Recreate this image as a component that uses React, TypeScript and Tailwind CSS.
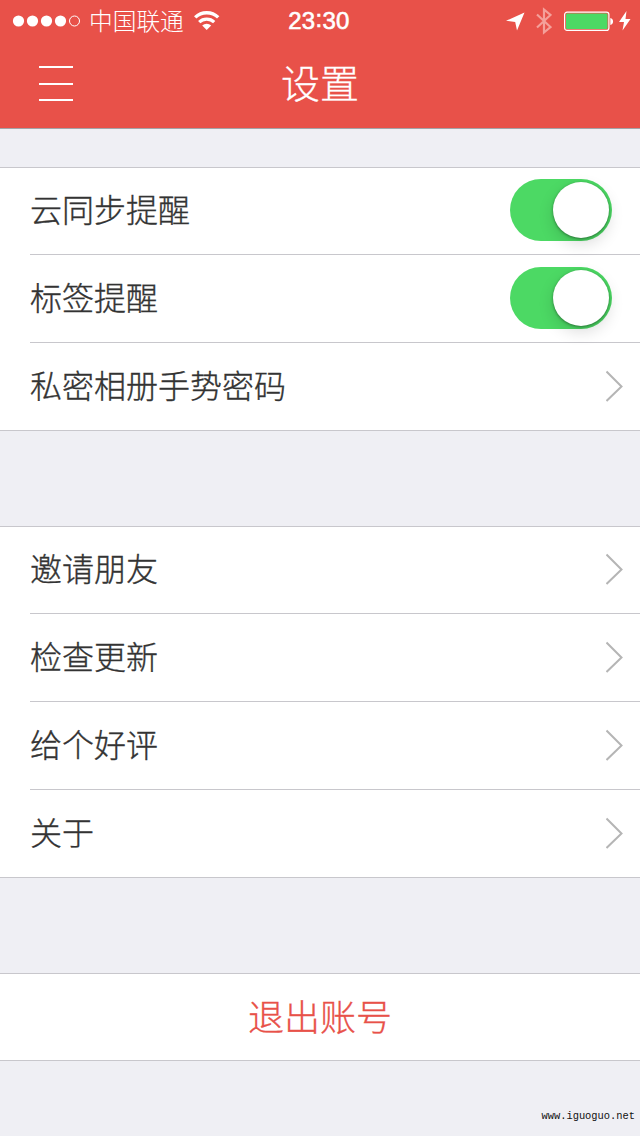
import { useState } from "react";

const Chevron = () => (
  <svg width="18" height="32" viewBox="0 0 18 32" fill="none" className="mr-4">
    <path d="M0.5 1.5L15.5 16.5L0.5 31" stroke="#b5b5b5" strokeWidth="2" />
  </svg>
);

const Switch = ({ label }: { label: string }) => {
  const [on, setOn] = useState(true);
  return (
    <button
      role="switch"
      aria-checked={on}
      aria-label={label}
      onClick={() => setOn(!on)}
      className={`mr-7 flex h-[62px] w-[102px] items-center rounded-full px-[3px] ${
        on ? "justify-end bg-[#4cd964]" : "justify-start bg-[#e5e5e5]"
      }`}
    >
      <span className="size-14 rounded-full bg-white shadow-[0_1px_3px_rgba(0,0,0,0.4),0_6px_16px_rgba(0,0,0,0.14)]" />
    </button>
  );
};

type Item = { label: string; toggle?: boolean };

const syncItems: Item[] = [
  { label: "云同步提醒", toggle: true },
  { label: "标签提醒", toggle: true },
  { label: "私密相册手势密码" },
];

const moreItems: Item[] = [
  { label: "邀请朋友" },
  { label: "检查更新" },
  { label: "给个好评" },
  { label: "关于" },
];

const Group = ({ items }: { items: Item[] }) => (
  <ul className="border-y border-[#c8c7cc] bg-white pl-[30px]">
    {items.map((item) => (
      <li
        key={item.label}
        className="flex h-[88px] items-center justify-between border-b border-[#c8c7cc] pb-px first:h-[87px] first:pb-0.5 last:h-[87px] last:border-b-0"
      >
        <span className="pb-1 text-[32px] leading-[48px] [-webkit-text-stroke:0.35px_#333]">
          {item.label}
        </span>
        {item.toggle ? <Switch label={item.label} /> : <Chevron />}
      </li>
    ))}
  </ul>
);

const StatusBar = () => (
  <div className="grid h-10 grid-cols-3 items-center">
    <div className="flex items-center pl-3">
      <svg width="70" height="14" viewBox="0 0 70 14" fill="#fff" className="shrink-0">
        <circle cx="6.5" cy="7" r="5.6" />
        <circle cx="20.5" cy="7" r="5.6" />
        <circle cx="34.5" cy="7" r="5.6" />
        <circle cx="48.5" cy="7" r="5.6" />
        <circle cx="62.5" cy="7" r="5" fill="none" stroke="#fff" />
      </svg>
      <span className="ml-[7px] pb-0.5 text-[23.7px] leading-10 whitespace-nowrap">中国联通</span>
      <svg width="26" height="20" viewBox="0 0 26 20" fill="none" stroke="#fff" className="ml-2.5 shrink-0">
        <path d="M1.2 6.4A16.5 16.5 0 0 1 24.2 6.4" strokeWidth="3.4" />
        <path d="M5.2 11.2A10.8 10.8 0 0 1 20.2 11.2" strokeWidth="3.2" />
        <path d="M12.7 19L8.2 14.6A6.4 6.4 0 0 1 17.2 14.6Z" fill="#fff" stroke="none" />
      </svg>
    </div>
    <div className="pr-0.5 text-center font-['Liberation_Sans',sans-serif] text-[24px] leading-10 font-normal tracking-[0.3px] [-webkit-text-stroke:0.6px_#fff]">
      23<span className="relative -top-0.5">:</span>30
    </div>
    <div className="flex items-center justify-end pr-[9px]">
      <svg width="19" height="20" viewBox="0 0 19 20" fill="#fff">
        <path d="M18.5 1.5L11 19.5L9.2 11L0 9.8Z" />
      </svg>
      <svg width="16" height="28" viewBox="0 0 16 28" fill="none" stroke="#f4a09a" strokeWidth="2.2" className="ml-[11px]">
        <path d="M1 7.5L14.5 20L8 25.5V2.5L14.5 8L1 20.5" />
      </svg>
      <svg width="50" height="20" viewBox="0 0 50 20" className="ml-3">
        <rect x="0.6" y="1.1" width="44.3" height="18.3" rx="2.5" fill="none" stroke="#fff" strokeWidth="1.2" />
        <rect x="2" y="2.5" width="41.5" height="15.5" rx="1.2" fill="#4cd964" />
        <path d="M46.3 7C50 7.5 50 13.5 46.3 14Z" fill="#fff" />
      </svg>
      <svg width="12" height="20" viewBox="0 0 12 20" fill="#fff" className="ml-[5px]">
        <path d="M7.5 0L0 11H5L3.5 19.5L11.5 8H6.5Z" />
      </svg>
    </div>
  </div>
);

const App = () => {
  return (
    <div className="flex h-[1136px] w-[640px] flex-col bg-[#efeff4] font-['Noto_Sans_CJK_SC',sans-serif] font-light text-[#333]">
      <header className="h-[129px] border-b border-[#a3a3a8] bg-[#e85149] text-white">
        <StatusBar />
        <div className="grid h-[87px] grid-cols-[1fr_auto_1fr] items-center">
          <button aria-label="菜单" className="ml-[39px] flex h-[35px] w-[34px] flex-col justify-between">
            <span className="h-0.5 w-full bg-white" />
            <span className="h-0.5 w-full bg-white" />
            <span className="h-0.5 w-full bg-white" />
          </button>
          <h1 className="pb-1.5 text-[39px] leading-[60px] [-webkit-text-stroke:0.3px_#fff]">设置</h1>
        </div>
      </header>

      <main className="mt-[38px] flex flex-col gap-[95px]">
        <Group items={syncItems} />
        <Group items={moreItems} />
        <button className="h-[88px] border-y border-[#c8c7cc] bg-white pb-[5px] text-[36px] leading-[54px] text-[#e85149] [-webkit-text-stroke:0.3px_#e85149]">
          退出账号
        </button>
      </main>

      <footer className="mt-auto pr-[5px] pb-[11px] text-right font-['Liberation_Mono',monospace] text-[10.4px] leading-[18px] font-normal text-[#111]">
        www.iguoguo.net
      </footer>
    </div>
  );
};

export default App;
